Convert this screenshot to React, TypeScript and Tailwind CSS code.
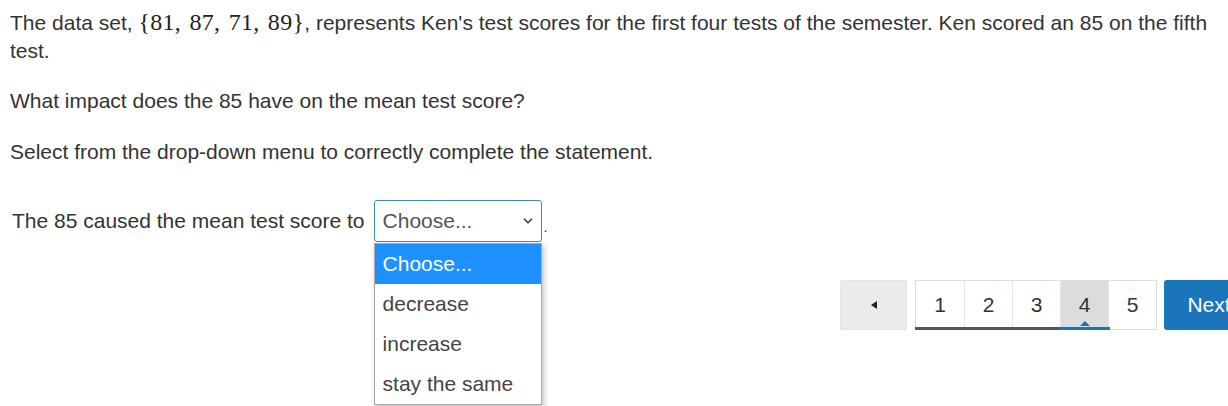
import { ChevronDown } from "lucide-react";

const OPTIONS = ["Choose...", "decrease", "increase", "stay the same"];
const PAGES = [1, 2, 3, 4, 5];

function MathSet() {
  return (
    <span className="font-['Liberation_Serif',serif] text-[24px] tracking-[0.3px] text-[#222] [word-spacing:2px]">
      {"{"}81, 87, 71, 89{"}"}
    </span>
  );
}

export default function App() {
  return (
    <div className="relative h-[406px] w-[1228px] overflow-hidden bg-white font-['Liberation_Sans',Arial,sans-serif] text-[21px] text-[#333]">
      <div className="pl-[10px] pt-[8px]">
        <p className="leading-[28px] whitespace-nowrap">
          The data set, <MathSet />, represents Ken's test scores for the first four tests of the semester. Ken scored an 85 on the fifth
          <br />
          test.
        </p>
        <p className="mt-[22px] leading-[28px]">What impact does the 85 have on the mean test score?</p>
        <p className="mt-[23px] leading-[28px]">Select from the drop-down menu to correctly complete the statement.</p>

        <div className="mt-[34px] flex items-center">
          <span className="pl-[2px]">The 85 caused the mean test score to</span>
          <div className="relative ml-[9px]">
            <div className="flex h-[42px] w-[168px] items-center justify-between rounded-[3px] border border-[#3d8fa8] bg-white pl-[8px] pr-[6px] text-[#555]">
              <span>Choose...</span>
              <ChevronDown size={14} strokeWidth={3} className="text-[#444]" />
            </div>
            <ul className="absolute left-0 top-[43px] z-10 w-[168px] border border-[#a9a9a9] bg-white shadow-[2px_3px_6px_rgba(0,0,0,0.25)]">
              {OPTIONS.map((o, i) => (
                <li key={o} className={`flex h-[40px] items-center pl-[8px] ${i === 0 ? "bg-[#1e90ff] text-white" : "text-[#444]"}`}>
                  {o}
                </li>
              ))}
            </ul>
          </div>
          <span className="ml-[2px] self-end pb-[4px] text-[14px]">.</span>
        </div>
      </div>

      <div className="mr-[-20px] mt-[38px] flex justify-end">
        <button className="flex h-[50px] w-[67px] items-center justify-center rounded-[2px] border border-[#e3e3e3] bg-[#ebebeb] text-[#222]">
          <svg width="8" height="10" viewBox="0 0 8 10"><path d="M7 1 L1 5 L7 9 Z" fill="#222" /></svg>
        </button>
        <div className="relative ml-[8px] flex h-[50px] border border-[#dedede]">
          {PAGES.map((p) => (
            <div
              key={p}
              className={`relative flex h-full w-[48px] items-center justify-center border-l border-[#e6e6e6] first:border-l-0 ${p === 4 ? "bg-[#dcdcdc] text-[#333]" : "bg-white text-[#333]"}`}
            >
              {p}
              {p === 4 && (
                <svg className="absolute bottom-[3px] left-1/2 -translate-x-1/2" width="10" height="5" viewBox="0 0 10 5"><path d="M0 5 L5 0 L10 5 Z" fill="#1a73b8" /></svg>
              )}
            </div>
          ))}
          <div className="absolute bottom-[-1px] left-[-1px] h-[3px] w-[145px] bg-[#555]" />
          <div className="absolute bottom-[-1px] left-[144px] h-[3px] w-[50px] bg-[#1a73b8]" />
        </div>
        <button className="ml-[7px] flex h-[50px] w-[84px] items-center justify-center rounded-[3px] bg-[#1b75bb] pl-[6px] text-[21px] text-white">
          Next
        </button>
      </div>
    </div>
  );
}
